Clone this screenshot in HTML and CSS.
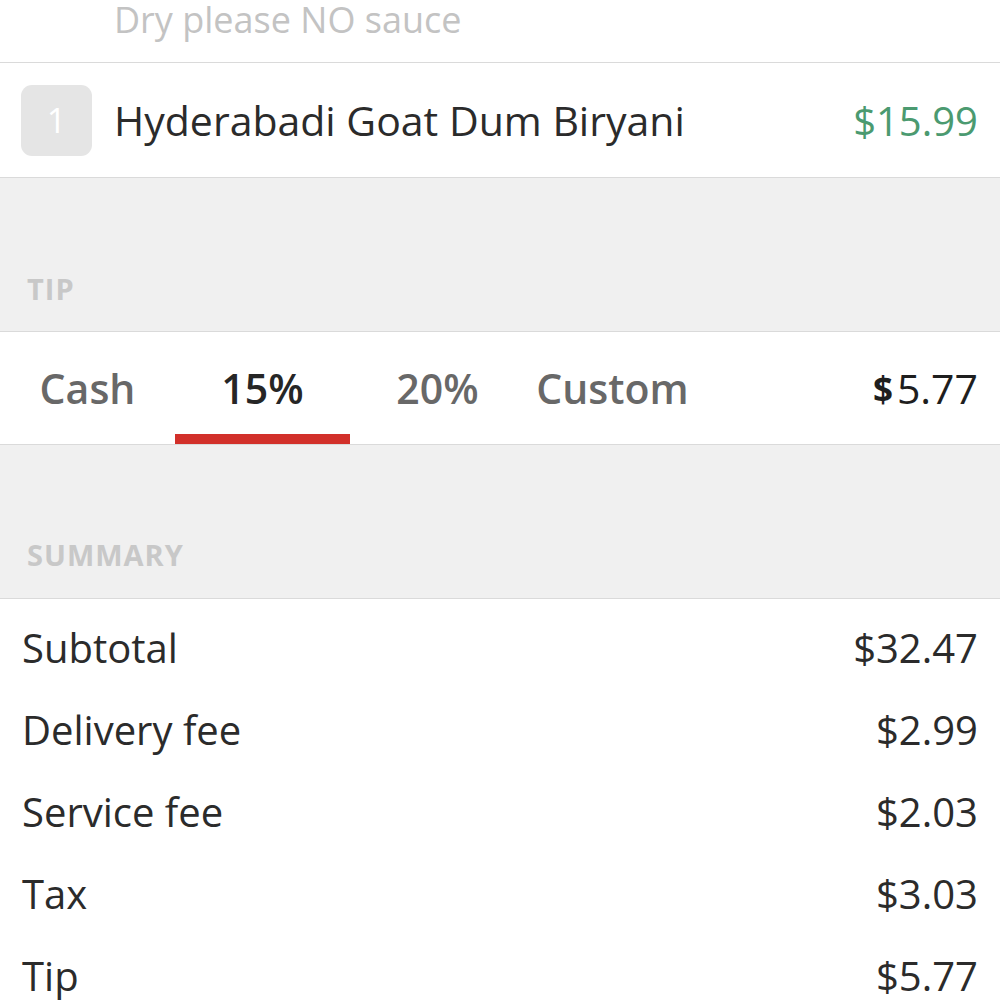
FILE: index.html
```html
<!DOCTYPE html>
<html lang="en">
<head>
    <meta charset="UTF-8">
    <meta name="viewport" content="width=device-width, initial-scale=1.0">
    <title>Checkout</title>
    <link rel="stylesheet" href="styles.css">
</head>
<body>
    <div class="order">
        <div class="note">Dry please NO sauce</div>
        <div class="item">
            <span class="qty">1</span>
            <span class="itemName">Hyderabadi Goat Dum Biryani</span>
            <span class="itemPrice">$15.99</span>
        </div>

        <div class="sectionHead">TIP</div>
        <div class="tipRow">
            <div class="tab">Cash</div>
            <div class="tab active">15%</div>
            <div class="tab">20%</div>
            <div class="tab">Custom</div>
            <div class="tipAmount"><b>$</b>5.77</div>
        </div>

        <div class="sectionHead tall">SUMMARY</div>
        <div class="summary">
            <div class="line"><span>Subtotal</span><span>$32.47</span></div>
            <div class="line"><span>Delivery fee</span><span>$2.99</span></div>
            <div class="line"><span>Service fee</span><span>$2.03</span></div>
            <div class="line"><span>Tax</span><span>$3.03</span></div>
            <div class="line"><span>Tip</span><span>$5.77</span></div>
        </div>
    </div>
</body>
</html>
```

FILE: styles.css
```css
body {
    margin: 0;
    background: #ffffff;
    font-family: "Open Sans", "Noto Sans", sans-serif;
    color: #2b2b2b;
}
.order {
    width: 1000px;
    overflow: hidden;
}
.note {
    height: 63px;
    box-sizing: border-box;
    padding: 2px 0 0 114px;
    font-size: 36px;
    line-height: 36px;
    color: #c3c3c3;
    border-bottom: 1px solid #dadada;
}
.item {
    height: 115px;
    box-sizing: border-box;
    display: flex;
    align-items: center;
    padding: 0 22px 0 21px;
    border-bottom: 1px solid #dadada;
}
.qty {
    width: 71px;
    height: 71px;
    border-radius: 11px;
    background: #e5e5e5;
    color: #ffffff;
    font-size: 34px;
    display: flex;
    align-items: center;
    justify-content: center;
    margin-right: 22px;
}
.itemName {
    flex: 1;
    font-size: 41px;
}
.itemPrice {
    font-size: 40px;
    color: #4b9a70;
}
.sectionHead {
    height: 154px;
    box-sizing: border-box;
    background: #f0f0f0;
    border-bottom: 1px solid #dadada;
    display: flex;
    align-items: flex-end;
    padding: 0 0 23px 27px;
    font-size: 29px;
    font-weight: 700;
    color: #c8c8c8;
    letter-spacing: 1px;
}
.sectionHead.tall {
    height: 154px;
    padding-bottom: 24px;
}
.tipRow {
    height: 113px;
    box-sizing: border-box;
    display: flex;
    align-items: stretch;
    padding-right: 22px;
    border-bottom: 1px solid #dadada;
}
.tab {
    width: 175px;
    display: flex;
    align-items: center;
    justify-content: center;
    box-sizing: border-box;
    font-size: 41px;
    font-weight: 600;
    color: #686868;
    border-bottom: 10px solid transparent;
    padding-top: 10px;
}
.tab.active {
    color: #262626;
    border-bottom-color: #d2302a;
}
.tipAmount {
    flex: 1;
    display: flex;
    align-items: center;
    justify-content: flex-end;
    font-size: 41px;
    color: #1e1e1e;
}
.tipAmount b {
    font-size: 35px;
    margin-right: 4px;
}
.summary {
    padding: 8px 22px 0 22px;
}
.line {
    display: flex;
    justify-content: space-between;
    height: 82px;
    line-height: 82px;
    font-size: 40px;
}
```
